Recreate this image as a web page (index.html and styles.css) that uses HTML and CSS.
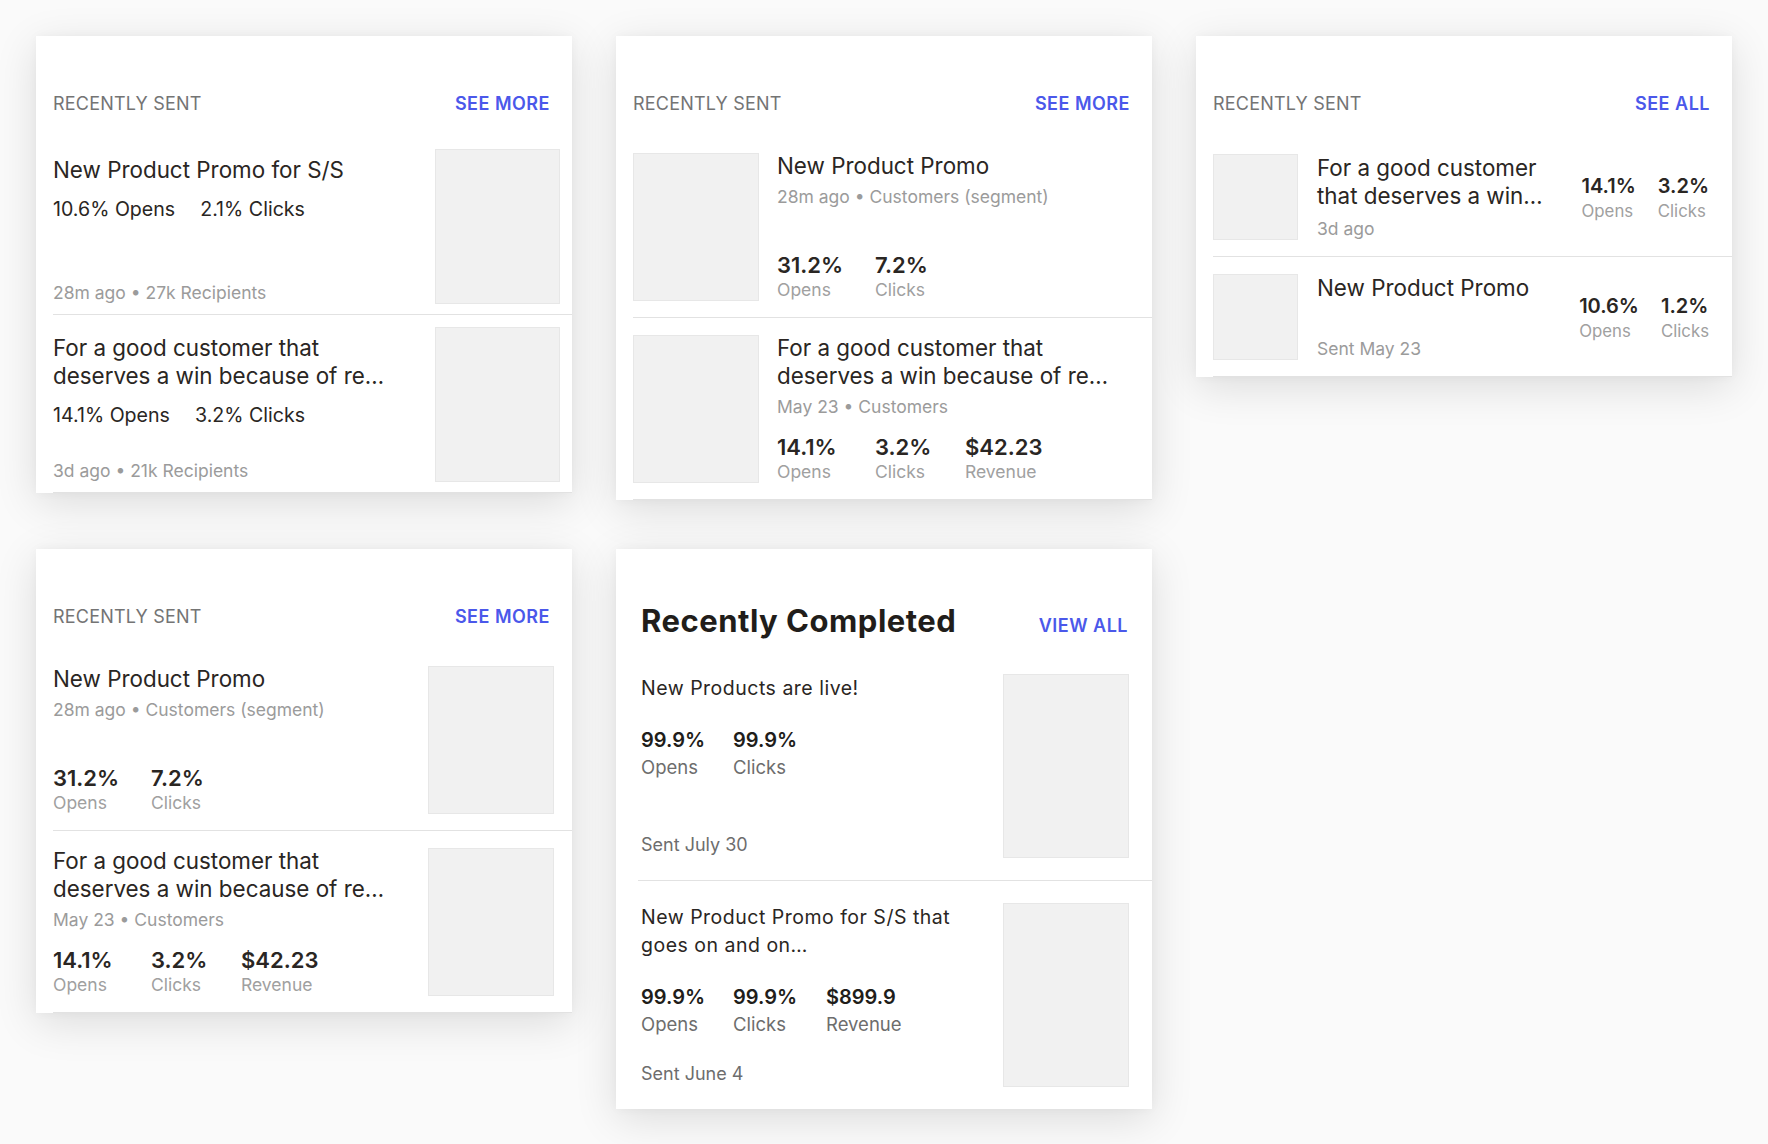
FILE: index.html
```html
<!DOCTYPE html>
<html lang="en">
<head>
<meta charset="utf-8">
<title>Recently Sent</title>
<link rel="stylesheet" href="styles.css">
</head>
<body>
<main class="board">

  <!-- Card 1 -->
  <section class="card card--a">
    <header class="card-head">
      <h2 class="card-label">Recently Sent</h2>
      <a class="card-link" href="#">SEE MORE</a>
    </header>
    <article class="row row--a">
      <div class="row-body">
        <h3 class="row-title">New Product Promo for S/S</h3>
        <p class="inline-stats"><span>10.6% Opens</span><span>2.1% Clicks</span></p>
        <p class="row-foot">28m ago • 27k Recipients</p>
      </div>
      <div class="thumb"></div>
    </article>
    <article class="row row--a">
      <div class="row-body">
        <h3 class="row-title">For a good customer that<br>deserves a win because of re…</h3>
        <p class="inline-stats"><span>14.1% Opens</span><span>3.2% Clicks</span></p>
        <p class="row-foot">3d ago • 21k Recipients</p>
      </div>
      <div class="thumb"></div>
    </article>
  </section>

  <!-- Card 2 -->
  <section class="card card--b">
    <header class="card-head">
      <h2 class="card-label">Recently Sent</h2>
      <a class="card-link" href="#">SEE MORE</a>
    </header>
    <article class="row row--b">
      <div class="thumb"></div>
      <div class="row-body">
        <h3 class="row-title">New Product Promo</h3>
        <p class="row-sub">28m ago • Customers (segment)</p>
        <div class="stats">
          <div class="stat"><span class="stat-num">31.2%</span><span class="stat-label">Opens</span></div>
          <div class="stat"><span class="stat-num">7.2%</span><span class="stat-label">Clicks</span></div>
        </div>
      </div>
    </article>
    <article class="row row--b">
      <div class="thumb"></div>
      <div class="row-body">
        <h3 class="row-title">For a good customer that<br>deserves a win because of re…</h3>
        <p class="row-sub">May 23 • Customers</p>
        <div class="stats">
          <div class="stat"><span class="stat-num">14.1%</span><span class="stat-label">Opens</span></div>
          <div class="stat"><span class="stat-num">3.2%</span><span class="stat-label">Clicks</span></div>
          <div class="stat"><span class="stat-num">$42.23</span><span class="stat-label">Revenue</span></div>
        </div>
      </div>
    </article>
  </section>

  <!-- Card 3 -->
  <section class="card card--c">
    <header class="card-head">
      <h2 class="card-label">Recently Sent</h2>
      <a class="card-link" href="#">SEE ALL</a>
    </header>
    <article class="row row--c">
      <div class="thumb"></div>
      <div class="row-body">
        <h3 class="row-title">For a good customer<br>that deserves a win…</h3>
        <p class="row-foot">3d ago</p>
      </div>
      <div class="stats">
        <div class="stat"><span class="stat-num">14.1%</span><span class="stat-label">Opens</span></div>
        <div class="stat"><span class="stat-num">3.2%</span><span class="stat-label">Clicks</span></div>
      </div>
    </article>
    <article class="row row--c">
      <div class="thumb"></div>
      <div class="row-body">
        <h3 class="row-title">New Product Promo</h3>
        <p class="row-foot">Sent May 23</p>
      </div>
      <div class="stats">
        <div class="stat"><span class="stat-num">10.6%</span><span class="stat-label">Opens</span></div>
        <div class="stat"><span class="stat-num">1.2%</span><span class="stat-label">Clicks</span></div>
      </div>
    </article>
  </section>

  <!-- Card 4 -->
  <section class="card card--b">
    <header class="card-head">
      <h2 class="card-label">Recently Sent</h2>
      <a class="card-link" href="#">SEE MORE</a>
    </header>
    <article class="row row--b row--flip">
      <div class="row-body">
        <h3 class="row-title">New Product Promo</h3>
        <p class="row-sub">28m ago • Customers (segment)</p>
        <div class="stats">
          <div class="stat"><span class="stat-num">31.2%</span><span class="stat-label">Opens</span></div>
          <div class="stat"><span class="stat-num">7.2%</span><span class="stat-label">Clicks</span></div>
        </div>
      </div>
      <div class="thumb"></div>
    </article>
    <article class="row row--b row--flip">
      <div class="row-body">
        <h3 class="row-title">For a good customer that<br>deserves a win because of re…</h3>
        <p class="row-sub">May 23 • Customers</p>
        <div class="stats">
          <div class="stat"><span class="stat-num">14.1%</span><span class="stat-label">Opens</span></div>
          <div class="stat"><span class="stat-num">3.2%</span><span class="stat-label">Clicks</span></div>
          <div class="stat"><span class="stat-num">$42.23</span><span class="stat-label">Revenue</span></div>
        </div>
      </div>
      <div class="thumb"></div>
    </article>
  </section>

  <!-- Card 5 -->
  <section class="card card--d">
    <header class="card-head">
      <h2 class="card-title">Recently Completed</h2>
      <a class="card-link" href="#">VIEW ALL</a>
    </header>
    <article class="row row--d">
      <div class="row-body">
        <h3 class="row-title">New Products are live!</h3>
        <div class="stats">
          <div class="stat"><span class="stat-num">99.9%</span><span class="stat-label">Opens</span></div>
          <div class="stat"><span class="stat-num">99.9%</span><span class="stat-label">Clicks</span></div>
        </div>
        <p class="row-foot">Sent July 30</p>
      </div>
      <div class="thumb"></div>
    </article>
    <article class="row row--d">
      <div class="row-body">
        <h3 class="row-title">New Product Promo for S/S that<br>goes on and on…</h3>
        <div class="stats">
          <div class="stat"><span class="stat-num">99.9%</span><span class="stat-label">Opens</span></div>
          <div class="stat"><span class="stat-num">99.9%</span><span class="stat-label">Clicks</span></div>
          <div class="stat"><span class="stat-num">$899.9</span><span class="stat-label">Revenue</span></div>
        </div>
        <p class="row-foot">Sent June 4</p>
      </div>
      <div class="thumb"></div>
    </article>
  </section>

</main>
</body>
</html>
```
FILE: styles.css
```css
* { box-sizing: border-box; }

body {
  margin: 0;
  background: #fafafa;
  font-family: Inter, "Noto Sans", sans-serif;
  color: #2a2623;
}

.board {
  display: grid;
  grid-template-columns: repeat(3, 536px);
  column-gap: 44px;
  row-gap: 49px;
  align-items: start;
  padding: 36px;
}

/* ---------- card ---------- */
.card {
  background: #fff;
  padding-left: 17px;
  box-shadow: 0 10px 40px rgba(0, 0, 0, 0.12), 0 0 10px rgba(0, 0, 0, 0.035);
}

.card-head {
  display: flex;
  justify-content: space-between;
  align-items: baseline;
  padding: 56px 22px 0 0;
  line-height: 24px;
}

.card-label {
  margin: 0;
  font-size: 18px;
  font-weight: 400;
  letter-spacing: 0.2px;
  text-transform: uppercase;
  color: #747474;
}

.card-link {
  font-size: 18px;
  font-weight: 600;
  letter-spacing: 0.5px;
  color: #4b58ea;
  text-decoration: none;
}

.card--a .card-head { margin-bottom: 21px; }
.card--b .card-head { margin-bottom: 20px; }
.card--c .card-head { margin-bottom: 21px; }

/* ---------- rows ---------- */
.row {
  display: flex;
  border-bottom: 1px solid #e2e2e2;
}

.thumb {
  flex: none;
  background: #f1f1f1;
  border: 1px solid #e7e7e7;
}

.row-body {
  flex: 1;
  min-width: 0;
  display: flex;
  flex-direction: column;
}

.row-title {
  margin: 0;
  font-size: 22.4px;
  font-weight: 400;
  line-height: 28px;
  white-space: nowrap;
}

.row-sub {
  margin: 6px 0 0;
  font-size: 17.5px;
  line-height: 22px;
  color: #9b9b9b;
}

.row-foot {
  margin: auto 0 0;
  font-size: 17.5px;
  line-height: 22px;
  color: #9b9b9b;
}

.stats {
  display: flex;
}

.stat {
  display: flex;
  flex-direction: column;
}

.stat-num {
  font-weight: 600;
  line-height: 26px;
}

.stat-label {
  margin-top: 1px;
  font-size: 17.5px;
  line-height: 22px;
  color: #a0a0a0;
}

/* variant a: text left, inline stats, thumb right */
.row--a { padding: 12px 12px 10px 0; }
.row--a .thumb { width: 125px; height: 155px; }
.row--a .row-body { padding-top: 7px; }

.inline-stats {
  display: flex;
  gap: 25px;
  margin: 12px 0 0;
  font-size: 19.6px;
  line-height: 26px;
}

/* variant b: thumb left, stacked stats */
.row--b { padding: 17px 0 16px 0; }
.row--b .thumb { width: 126px; height: 148px; }
.row--b .row-body { margin-left: 18px; }
.row--b .row-title { margin-top: -1px; }
.row--b .stats {
  display: grid;
  grid-template-columns: 98px 90px auto;
  margin-top: auto;
}
.row--b .stat-num { font-size: 22px; }

.row--flip { padding-right: 18px; }
.row--flip .row-body { margin-left: 0; }

/* variant c: small thumb, stats at right */
.row--c { padding: 17px 23px 16px 0; }
.row--c .thumb { width: 85px; height: 86px; }
.row--c .row-body { margin-left: 19px; }
.row--c .stats { align-self: center; gap: 22px; }
.row--c .stat-num { font-size: 20px; }
.row--c .stat-label { font-size: 16.8px; }

/* variant d: recently completed */
.card--d { padding-left: 22px; }
.card--d .card-head {
  padding: 53px 24px 0 3px;
  line-height: 38px;
  margin-bottom: 7px;
}

.card-title {
  margin: 0;
  font-size: 31px;
  font-weight: 700;
  letter-spacing: 0.5px;
  color: #211d1a;
}

.row--d { padding: 22px 23px 22px 3px; }
.row--d:last-child { border-bottom: 0; }
.row--d .thumb { width: 126px; height: 184px; }
.row--d .row-title {
  font-size: 19.5px;
  letter-spacing: 0.5px;
}
.row--d .stats {
  display: grid;
  grid-template-columns: 92px 93px auto;
  margin-top: 25px;
}
.row--d .stat-num { font-size: 20px; color: #211d1a; }
.row--d .stat-label {
  font-size: 18.5px;
  line-height: 26px;
  color: #6d6d6d;
}
.row--d .row-foot {
  font-size: 18px;
  line-height: 26px;
  color: #6d6d6d;
}
```
